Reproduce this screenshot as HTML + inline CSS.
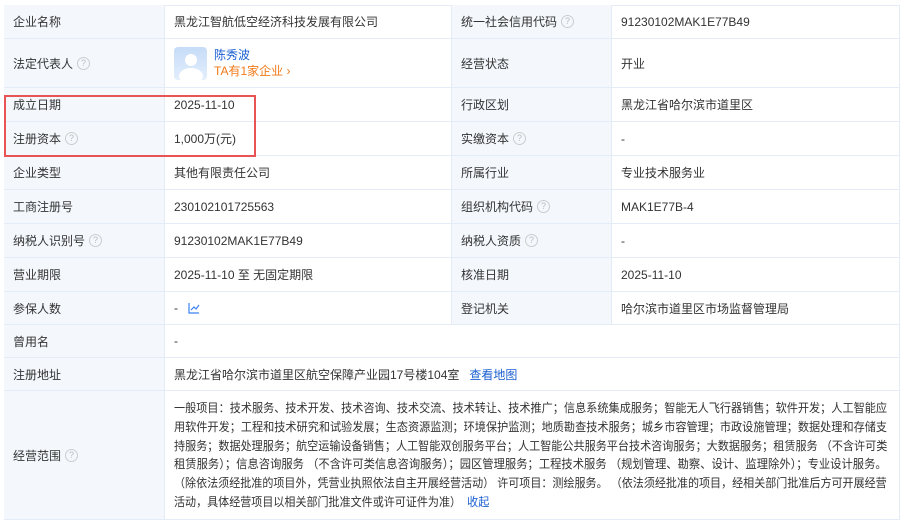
<!DOCTYPE html><html><head><meta charset="utf-8"><style>
body{margin:0;width:904px;height:512px;background:#fff;overflow:hidden;font-family:"Liberation Sans","Noto Sans CJK SC",sans-serif;font-size:12px;color:#333;position:relative}
.c{position:absolute;box-sizing:border-box;border-right:1px solid #e4ecf7;border-bottom:1px solid #e4ecf7;display:flex;align-items:center;padding-left:9px}
.l{background:#f4f8fd}
.q{display:inline-block;width:11px;height:11px;border:1px solid #ccc;border-radius:50%;font-size:9px;line-height:11px;text-align:center;color:#bbb;margin-left:4px}
a{color:#1a5fd0;text-decoration:none}
.sl{position:absolute;left:174px;white-space:nowrap;transform-origin:0 0;line-height:19px;height:19px}
</style></head><body>
<div style="position:absolute;left:4px;top:5px;width:896px;height:1px;background:#e4ecf7"></div>
<div style="position:absolute;left:4px;top:5px;width:1px;height:507px;background:#e4ecf7"></div>
<div id="t"></div>
<script>
var R=[[5,39,["企业名称",0],"黑龙江智航低空经济科技发展有限公司",["统一社会信用代码",1],"91230102MAK1E77B49"],
[39,88,["法定代表人",1],"REP",["经营状态",0],"开业"],
[88,122,["成立日期",0],"2025-11-10",["行政区划",0],"黑龙江省哈尔滨市道里区"],
[122,156,["注册资本",1],"1,000万(元)",["实缴资本",1],"-"],
[156,190,["企业类型",0],"其他有限责任公司",["所属行业",0],"专业技术服务业"],
[190,224,["工商注册号",0],"230102101725563",["组织机构代码",1],"MAK1E77B-4"],
[224,258,["纳税人识别号",1],"91230102MAK1E77B49",["纳税人资质",1],"-"],
[258,292,["营业期限",0],"2025-11-10 至 无固定期限",["核准日期",0],"2025-11-10"],
[292,325,["参保人数",0],"CHART",["登记机关",0],"哈尔滨市道里区市场监督管理局"],
[325,358,["曾用名",0],"-"],
[358,391,["注册地址",0],"黑龙江省哈尔滨市道里区航空保障产业园17号楼104室&nbsp;&nbsp;&nbsp;<a>查看地图</a>"],
[391,520,["经营范围",1],""]];
var h="";
function lab(a){return a[0]+(a[1]?'<span class="q">?</span>':'')}
R.forEach(function(r){var y=r[0],H=r[1]-r[0];
h+='<div class="c l" style="left:4px;top:'+y+'px;width:161px;height:'+H+'px">'+lab(r[2])+'</div>';
var v=r[3];
if(v=="REP")v='<div style="width:33px;height:33px;border-radius:4px;background:linear-gradient(#c6dcf8,#e3eefc);margin-right:7px;position:relative;overflow:hidden"><div style="position:absolute;left:11px;top:7px;width:12px;height:12px;border-radius:50%;background:#fff"></div><div style="position:absolute;left:5px;top:21px;width:24px;height:16px;border-radius:50%;background:#fff"></div></div><div style="line-height:16px"><a style="font-size:12px">陈秀波</a><br><span style="color:#f27a1a">TA有1家企业 ›</span></div>';
if(v=="CHART")v='-&nbsp;&nbsp;&nbsp;<svg width="12" height="11" viewBox="0 0 12 11"><path d="M1 0V10H11M3 7L6 4L8 6L11 2" fill="none" stroke="#3b82f6" stroke-width="1.2"/></svg>';
if(r.length>4){
h+='<div class="c" style="left:165px;top:'+y+'px;width:287px;height:'+H+'px">'+v+'</div>';
h+='<div class="c l" style="left:452px;top:'+y+'px;width:160px;height:'+H+'px">'+lab(r[4])+'</div>';
h+='<div class="c" style="left:612px;top:'+y+'px;width:288px;height:'+H+'px">'+r[5]+'</div>';
}else h+='<div class="c" style="left:165px;top:'+y+'px;width:735px;height:'+H+'px">'+v+'</div>';
});
var L=["一般项目：技术服务、技术开发、技术咨询、技术交流、技术转让、技术推广；信息系统集成服务；智能无人飞行器销售；软件开发；人工智能应",
"用软件开发；工程和技术研究和试验发展；生态资源监测；环境保护监测；地质勘查技术服务；城乡市容管理；市政设施管理；数据处理和存储支",
"持服务；数据处理服务；航空运输设备销售；人工智能双创服务平台；人工智能公共服务平台技术咨询服务；大数据服务；租赁服务 （不含许可类",
"租赁服务）；信息咨询服务 （不含许可类信息咨询服务）；园区管理服务；工程技术服务 （规划管理、勘察、设计、监理除外）；专业设计服务。",
" （除依法须经批准的项目外，凭营业执照依法自主开展经营活动） 许可项目：测绘服务。 （依法须经批准的项目，经相关部门批准后方可开展经营",
"活动，具体经营项目以相关部门批准文件或许可证件为准）&nbsp;&nbsp;<a>收起</a>"];
L.forEach(function(s,i){h+='<div class="sl" data-i="'+i+'" style="top:'+(399+i*18.8)+'px">'+s+'</div>';});
h+='<div style="position:absolute;left:4px;top:95px;width:252px;height:62px;box-sizing:border-box;border:2px solid #e85454"></div>';
document.getElementById("t").innerHTML=h;
var els=document.querySelectorAll(".sl"),sc=1;
for(var i=0;i<5;i++){var w=els[i].scrollWidth;var s=713/w;els[i].style.transform="scaleX("+s+")";sc=s;}
els[5].style.transform="scaleX("+sc+")";
</script>
</body></html>
